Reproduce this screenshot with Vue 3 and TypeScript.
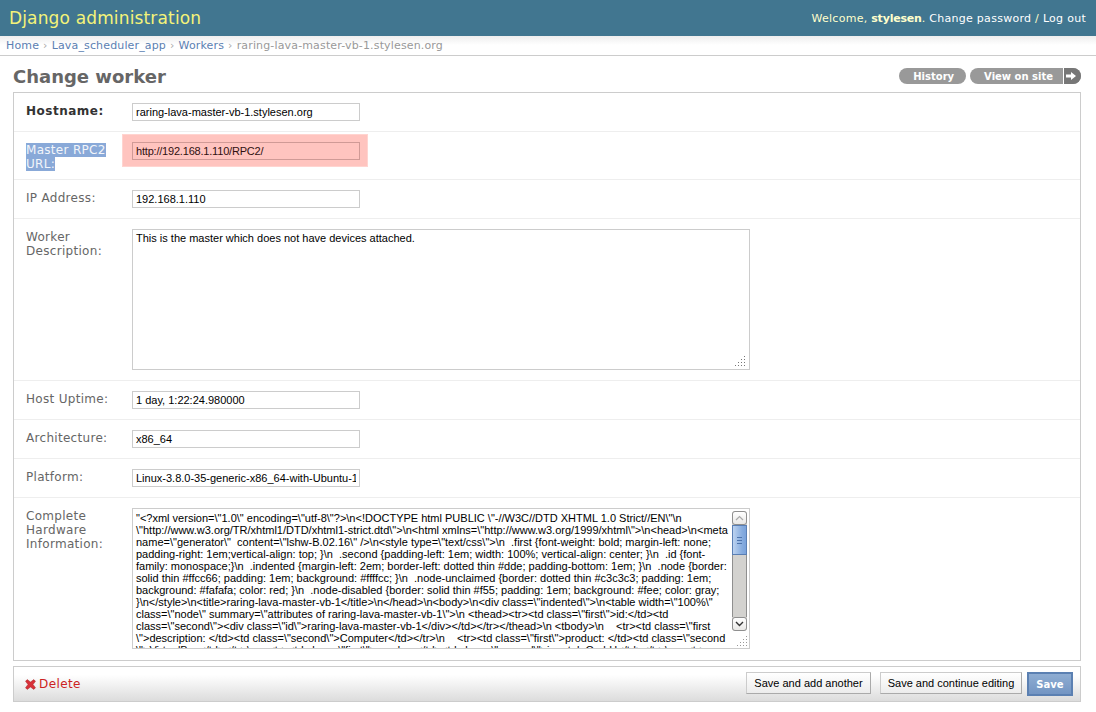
<script setup lang="ts">
interface Field {
  label: string
  value: string
  required?: boolean
  selected?: boolean
  error?: boolean
}

const hostFields: Field[] = [
  { label: 'Hostname:', value: 'raring-lava-master-vb-1.stylesen.org', required: true },
  { label: 'Master RPC2 URL:', value: 'http://192.168.1.110/RPC2/', selected: true, error: true },
  { label: 'IP Address:', value: '192.168.1.110' },
]

const infoFields: Field[] = [
  { label: 'Host Uptime:', value: '1 day, 1:22:24.980000' },
  { label: 'Architecture:', value: 'x86_64' },
  { label: 'Platform:', value: 'Linux-3.8.0-35-generic-x86_64-with-Ubuntu-13.04-raring' },
]

const description = 'This is the master which does not have devices attached.'

const hardware = [
  '"<?xml version=\\"1.0\\" encoding=\\"utf-8\\"?>\\n<!DOCTYPE html PUBLIC \\"-//W3C//DTD XHTML 1.0 Strict//EN\\"\\n',
  '\\"http://www.w3.org/TR/xhtml1/DTD/xhtml1-strict.dtd\\">\\n<html xmlns=\\"http://www.w3.org/1999/xhtml\\">\\n<head>\\n<meta',
  'name=\\"generator\\"  content=\\"lshw-B.02.16\\" />\\n<style type=\\"text/css\\">\\n  .first {font-weight: bold; margin-left: none;',
  'padding-right: 1em;vertical-align: top; }\\n  .second {padding-left: 1em; width: 100%; vertical-align: center; }\\n  .id {font-',
  'family: monospace;}\\n  .indented {margin-left: 2em; border-left: dotted thin #dde; padding-bottom: 1em; }\\n  .node {border:',
  'solid thin #ffcc66; padding: 1em; background: #ffffcc; }\\n  .node-unclaimed {border: dotted thin #c3c3c3; padding: 1em;',
  'background: #fafafa; color: red; }\\n  .node-disabled {border: solid thin #f55; padding: 1em; background: #fee; color: gray;',
  '}\\n</style>\\n<title>raring-lava-master-vb-1</title>\\n</head>\\n<body>\\n<div class=\\"indented\\">\\n<table width=\\"100%\\"',
  'class=\\"node\\" summary=\\"attributes of raring-lava-master-vb-1\\">\\n <thead><tr><td class=\\"first\\">id:</td><td',
  'class=\\"second\\"><div class=\\"id\\">raring-lava-master-vb-1</div></td></tr></thead>\\n <tbody>\\n    <tr><td class=\\"first',
  '\\">description: </td><td class=\\"second\\">Computer</td></tr>\\n    <tr><td class=\\"first\\">product: </td><td class=\\"second',
  '\\">VirtualBox</td></tr>\\n    <tr><td class=\\"first\\">vendor: </td><td class=\\"second\\">innotek GmbH</td></tr>\\n    <tr>',
].join('\n')
</script>

<template>
  <div class="page">
    <header class="top">
      <h1 class="brand">Django administration</h1>
      <div class="user-tools">
        Welcome, <strong>stylesen</strong>. <a>Change password</a> / <a>Log out</a>
      </div>
    </header>

    <nav class="crumbs">
      <a>Home</a><span class="sep">›</span><a>Lava_scheduler_app</a><span class="sep">›</span><a>Workers</a><span class="sep">›</span>raring-lava-master-vb-1.stylesen.org
    </nav>

    <main class="content">
      <div class="title-row">
        <h2>Change worker</h2>
        <div class="object-tools">
          <a class="tool">History</a>
          <a class="tool tool--site">
            <span class="tool-text">View on site</span>
            <span class="tool-arrow">
              <svg width="12" height="10" viewBox="0 0 12 10">
                <path d="M1 3.5h5V1l5 4-5 4V6.5H1z" fill="#fff" />
              </svg>
            </span>
          </a>
        </div>
      </div>

      <section class="fieldset">
        <div v-for="f in hostFields" :key="f.label" class="row" :class="{ 'row--error': f.error }">
          <label class="lbl" :class="{ 'lbl--req': f.required }"><span :class="{ sel: f.selected }">{{ f.label }}</span></label>
          <span class="field-wrap" :class="{ 'field-wrap--error': f.error }">
            <input class="txt" :value="f.value" readonly />
          </span>
        </div>

        <div class="row">
          <label class="lbl">Worker Description:</label>
          <textarea class="area area--desc" readonly :value="description"></textarea>
          <svg class="grip grip--desc" width="10" height="10" viewBox="0 0 10 10">
            <g fill="#777">
              <rect x="9" y="0" width="1" height="1" /><rect x="6" y="3" width="1" height="1" /><rect x="9" y="3" width="1" height="1" />
              <rect x="3" y="6" width="1" height="1" /><rect x="6" y="6" width="1" height="1" /><rect x="9" y="6" width="1" height="1" />
              <rect x="0" y="9" width="1" height="1" /><rect x="3" y="9" width="1" height="1" /><rect x="6" y="9" width="1" height="1" /><rect x="9" y="9" width="1" height="1" />
            </g>
          </svg>
        </div>

        <div v-for="f in infoFields" :key="f.label" class="row">
          <label class="lbl">{{ f.label }}</label>
          <input class="txt" :value="f.value" readonly />
        </div>

        <div class="row row--last">
          <label class="lbl">Complete Hardware Information:</label>
          <div class="area-box">
            <textarea class="area area--hw" readonly :value="hardware"></textarea>
            <div class="scrollbar">
              <div class="sb-btn">
                <svg width="9" height="6" viewBox="0 0 9 6"><path d="M1 5l3.5-3.5L8 5" fill="none" stroke="#aaa" stroke-width="1.2" /></svg>
              </div>
              <div class="sb-thumb"><i></i><i></i><i></i></div>
              <div class="sb-track"></div>
              <div class="sb-btn">
                <svg width="9" height="6" viewBox="0 0 9 6"><path d="M1 1l3.5 3.5L8 1" fill="none" stroke="#333" stroke-width="1.4" /></svg>
              </div>
            </div>
            <svg class="grip grip--hw" width="10" height="10" viewBox="0 0 10 10">
              <g fill="#999">
                <rect x="9" y="0" width="1" height="1" /><rect x="6" y="3" width="1" height="1" /><rect x="9" y="3" width="1" height="1" />
                <rect x="3" y="6" width="1" height="1" /><rect x="6" y="6" width="1" height="1" /><rect x="9" y="6" width="1" height="1" />
                <rect x="0" y="9" width="1" height="1" /><rect x="3" y="9" width="1" height="1" /><rect x="6" y="9" width="1" height="1" /><rect x="9" y="9" width="1" height="1" />
              </g>
            </svg>
          </div>
        </div>
      </section>

      <footer class="submit-row">
        <a class="delete">
          <svg width="11" height="11" viewBox="0 0 11 11">
            <path d="M2.2.6 5.5 3 8.8.6l1.7 1.7L8 5.5l2.5 3.2-1.7 1.7L5.5 8l-3.3 2.4L.5 8.7 3 5.5.5 2.3z" fill="#d8323a" stroke="#a92a2a" stroke-width=".5" />
          </svg>
          Delete
        </a>
        <div class="actions">
          <button class="btn" type="button">Save and add another</button>
          <button class="btn" type="button">Save and continue editing</button>
          <button class="btn btn--default" type="button">Save</button>
        </div>
      </footer>
    </main>
  </div>
</template>

<style scoped>
.page {
  width: 1096px;
  height: 712px;
  overflow: hidden;
  background: #fff;
  font-family: "DejaVu Sans", sans-serif;
  font-size: 11px;
  color: #333;
}

.top {
  height: 36px;
  background: #417690;
  display: flex;
  align-items: center;
  justify-content: space-between;
  padding: 0 10px 0 9px;
}

.brand {
  margin: 0;
  font-size: 17px;
  font-weight: 400;
  color: #f4f379;
  letter-spacing: 0.15px;
}

.user-tools {
  font-size: 11px;
  letter-spacing: 0.28px;
  color: #ffc;
}

.user-tools strong {
  font-weight: 700;
  letter-spacing: -0.2px;
}

.user-tools a {
  color: #fff;
}

.crumbs {
  height: 20px;
  line-height: 19px;
  box-sizing: border-box;
  padding-left: 6px;
  font-size: 11px;
  letter-spacing: 0.15px;
  color: #999;
  background: linear-gradient(#eee, #fff 9px);
  border-bottom: 1px solid #ccc;
}

.crumbs a {
  color: #5b80b2;
}

.crumbs .sep {
  margin: 0 4px;
  color: #aaa;
}

.content {
  padding: 0 15px 0 13px;
}

.title-row {
  height: 36px;
  display: flex;
  justify-content: space-between;
  align-items: flex-start;
}

.title-row h2 {
  margin: 12px 0 0;
  font-size: 18px;
  line-height: 18px;
  font-weight: 700;
  color: #666;
}

.object-tools {
  display: flex;
  gap: 4px;
  margin-top: 12px;
}

.tool {
  display: flex;
  align-items: center;
  height: 16px;
  padding: 0 12px 0 14px;
  border-radius: 8px;
  background: #999;
  color: #fff;
  font-size: 10px;
  font-weight: 700;
}

.tool--site {
  padding: 0;
  overflow: hidden;
}

.tool-text {
  padding: 0 10px 0 14px;
}

.tool-arrow {
  width: 18px;
  height: 16px;
  box-sizing: border-box;
  padding-left: 1px;
  border-left: 1px solid #fff;
  background: #777;
  display: flex;
  align-items: center;
}

.fieldset {
  border: 1px solid #ccc;
  width: 1068px;
  box-sizing: border-box;
}

.row {
  position: relative;
  display: flex;
  align-items: flex-start;
  padding: 10px 12px;
  border-bottom: 1px solid #eee;
}

.row--error {
  padding-bottom: 8px;
}

.row--last {
  border-bottom: 0;
  padding-bottom: 11px;
}

.lbl {
  width: 106px;
  flex: none;
  color: #666;
  font-size: 12px;
  line-height: 14px;
  letter-spacing: 0.3px;
  padding-top: 1px;
}

.lbl--req {
  font-weight: 700;
  color: #333;
  letter-spacing: 0.5px;
}

.sel {
  background: #89a9d8;
  color: #f2f5fa;
}

.field-wrap {
  display: block;
}

.field-wrap--error {
  margin: -7px 0 0 -9px;
  padding: 7px 7px 6px 9px;
  background: #ffc4bf;
  box-shadow: 0 0 0 1px #ffd4d0;
}

.txt {
  display: block;
  width: 228px;
  height: 18px;
  box-sizing: border-box;
  padding: 2px 3px;
  border: 1px solid #ccc;
  border-radius: 0;
  outline: 0;
  background: #fff;
  color: #000;
  font-family: "Liberation Sans", sans-serif;
  font-size: 11px;
}

.field-wrap--error .txt {
  background: #ffc4bf;
  border-color: #d09a96;
  color: #301010;
  letter-spacing: -0.2px;
}

.area {
  display: block;
  box-sizing: border-box;
  width: 618px;
  height: 141px;
  padding: 3px;
  border: 1px solid #ccc;
  border-radius: 0;
  outline: 0;
  resize: none;
  overflow: hidden;
  background: #fff;
  color: #000;
  font-family: "Liberation Sans", sans-serif;
  font-size: 11px;
  line-height: 12px;
}

.area--desc {
  padding-top: 2px;
}

.area--hw {
  white-space: pre;
}

.area-box {
  position: relative;
  width: 618px;
  height: 141px;
}

.grip {
  position: absolute;
  pointer-events: none;
}

.grip--desc {
  left: 721px;
  top: 137px;
}

.grip--hw {
  right: 3px;
  bottom: 3px;
}

.scrollbar {
  position: absolute;
  top: 3px;
  right: 3px;
  width: 15px;
  height: 120px;
  display: flex;
  flex-direction: column;
  box-sizing: border-box;
  background: #d3d2cf;
  border-radius: 3px;
}

.sb-btn {
  height: 14px;
  flex: none;
  box-sizing: border-box;
  border: 1px solid #8f8f8f;
  border-radius: 3px;
  background: linear-gradient(#fff, #e9e8e6);
  display: flex;
  align-items: center;
  justify-content: center;
}

.sb-thumb {
  height: 30px;
  flex: none;
  box-sizing: border-box;
  border: 1px solid #5a7fb4;
  background: linear-gradient(90deg, #bcd2ef, #86acdf 70%, #7ba3db);
  display: flex;
  flex-direction: column;
  align-items: center;
  justify-content: center;
  gap: 2px;
}

.sb-thumb i {
  display: block;
  width: 5px;
  height: 1px;
  background: #4d74ad;
}

.sb-track {
  flex: 1;
  border-left: 1px solid #8f8f8f;
  border-right: 1px solid #8f8f8f;
}

.submit-row {
  width: 1068px;
  height: 36px;
  box-sizing: border-box;
  margin-top: 5px;
  border: 1px solid #ccc;
  background: linear-gradient(#fff, #fff 8px, #dcdcdc);
  display: flex;
  align-items: center;
  justify-content: space-between;
  padding: 0 7px 0 11px;
}

.delete {
  display: flex;
  align-items: center;
  gap: 3px;
  color: #c22;
  font-size: 12px;
  letter-spacing: 0.4px;
}

.actions {
  display: flex;
  align-items: flex-start;
  gap: 9px;
}

.actions .btn--default {
  margin-left: -4px;
}

.btn {
  height: 22px;
  width: 125px;
  padding: 0;
  border: 1px solid #ccc;
  border-right-color: #aaa;
  border-bottom-color: #aaa;
  border-radius: 0;
  background: linear-gradient(#fff, #ececec);
  color: #000;
  font-family: "Liberation Sans", sans-serif;
  font-size: 11px;
}

.btn:nth-child(2) {
  width: 142px;
}

.btn.btn--default {
  height: 24px;
  width: 46px;
  padding: 0;
  border: 2px solid #5b80b2;
  background: linear-gradient(#8fadd2, #7395c3);
  color: #fff;
  font-family: "DejaVu Sans", sans-serif;
  font-size: 10px;
  font-weight: 700;
}
</style>
